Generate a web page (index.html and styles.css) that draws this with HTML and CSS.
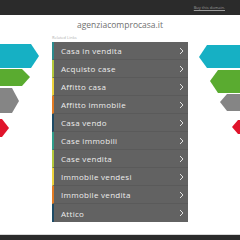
FILE: index.html
```html
<!DOCTYPE html>
<html lang="it">
  <head>
    <meta charset="UTF-8" />
    <meta name="viewport" content="width=device-width, initial-scale=1.0" />
    <title>agenziacomprocasa.it</title>
    <link rel="stylesheet" href="styles.css">
  </head>
  <body>
    <div class="top">
      <a class="buy" href="#">Buy this domain.</a>
    </div>
    <div class="page">
      <svg class="deco" width="52" height="130" viewBox="0 15 52 130">
        <polygon fill="#16b0c4" points="0,44 31,44 39,56 31,68 0,68" />
        <polygon fill="#5aab30" points="0,69 22,69 30,77 22,86 0,86" />
        <polygon fill="#858585" points="0,88 12,88 19,101 12,113 0,113" />
        <polygon fill="#e0142b" points="0,119 2,119 9,128 2,137 0,137" />
      </svg>
      <div class="center">
        <h1 class="domain">agenziacomprocasa.it</h1>
        <p class="label">Related Links</p>
        <ul class="links">
          <li class="teal"><span>Casa in vendita</span><svg class="chev" width="5" height="8" viewBox="0 0 5 8"><polyline points="1,1 4,4 1,7" /></svg></li>
          <li class="lime"><span>Acquisto case</span><svg class="chev" width="5" height="8" viewBox="0 0 5 8"><polyline points="1,1 4,4 1,7" /></svg></li>
          <li class="yellow"><span>Affitto casa</span><svg class="chev" width="5" height="8" viewBox="0 0 5 8"><polyline points="1,1 4,4 1,7" /></svg></li>
          <li class="orange"><span>Affitto immobile</span><svg class="chev" width="5" height="8" viewBox="0 0 5 8"><polyline points="1,1 4,4 1,7" /></svg></li>
          <li class="navy"><span>Casa vendo</span><svg class="chev" width="5" height="8" viewBox="0 0 5 8"><polyline points="1,1 4,4 1,7" /></svg></li>
          <li class="sea"><span>Case immobili</span><svg class="chev" width="5" height="8" viewBox="0 0 5 8"><polyline points="1,1 4,4 1,7" /></svg></li>
          <li class="lime"><span>Case vendita</span><svg class="chev" width="5" height="8" viewBox="0 0 5 8"><polyline points="1,1 4,4 1,7" /></svg></li>
          <li class="yellow"><span>Immobile vendesi</span><svg class="chev" width="5" height="8" viewBox="0 0 5 8"><polyline points="1,1 4,4 1,7" /></svg></li>
          <li class="orange"><span>Immobile vendita</span><svg class="chev" width="5" height="8" viewBox="0 0 5 8"><polyline points="1,1 4,4 1,7" /></svg></li>
          <li class="navy"><span>Attico</span><svg class="chev" width="5" height="8" viewBox="0 0 5 8"><polyline points="1,1 4,4 1,7" /></svg></li>
        </ul>
      </div>
      <svg class="deco" width="52" height="130" viewBox="188 15 52 130">
        <polygon fill="#16b0c4" points="240,45 207,45 199,57 207,68 240,68" />
        <polygon fill="#5aab30" points="240,70 218,70 210,81 218,93 240,93" />
        <polygon fill="#858585" points="240,94 227,94 220,102 227,111 240,111" />
        <polygon fill="#e0142b" points="240,120 238,120 232,127 238,134 240,134" />
      </svg>
    </div>
    <div class="foot"></div>
  </body>
</html>
```

FILE: styles.css
```css
* {
  margin: 0;
  padding: 0;
  box-sizing: border-box;
}
body {
  width: 240px;
  height: 240px;
  display: flex;
  flex-direction: column;
  background-color: #fff;
  font-family: "Open Sans", "Liberation Sans", sans-serif;
  overflow: hidden;
}

.top {
  height: 15px;
  background-color: #2b2b2b;
  display: flex;
  justify-content: flex-end;
  align-items: center;
  padding-right: 15px;
}
.buy {
  font-size: 4px;
  color: #9a9a9a;
}

.page {
  display: flex;
}
.deco {
  display: block;
  flex: none;
}
.center {
  width: 136px;
}
.domain {
  margin-top: 3px;
  height: 14px;
  line-height: 14px;
  font-size: 8.5px;
  font-weight: normal;
  color: #707070;
  text-align: center;
}
.label {
  margin-top: 2px;
  height: 8px;
  line-height: 8px;
  font-size: 4px;
  color: #b0b0b0;
}

.links {
  list-style: none;
  background-color: #626262;
}
.links li {
  height: 18px;
  display: flex;
  justify-content: space-between;
  align-items: center;
  padding: 0 4px 0 7px;
  border-left: 2px solid #2b8a8c;
  border-bottom: 1px solid #5a5a5a;
  font-size: 8px;
  letter-spacing: 0.3px;
  color: #ededed;
}
.links li:last-child {
  border-bottom: none;
}
.links .teal { border-left-color: #2b8a8c; }
.links .lime { border-left-color: #b3c83a; }
.links .yellow { border-left-color: #ecd23c; }
.links .orange { border-left-color: #e27a22; }
.links .navy { border-left-color: #1e4b66; }
.links .sea { border-left-color: #2f9d8a; }

.chev {
  display: block;
  fill: none;
  stroke: #e0e0e0;
  stroke-width: 1;
}

.foot {
  margin-top: auto;
  height: 6px;
  background-color: #2b2b2b;
  border-top: 1px solid #d8d8d8;
}
```
